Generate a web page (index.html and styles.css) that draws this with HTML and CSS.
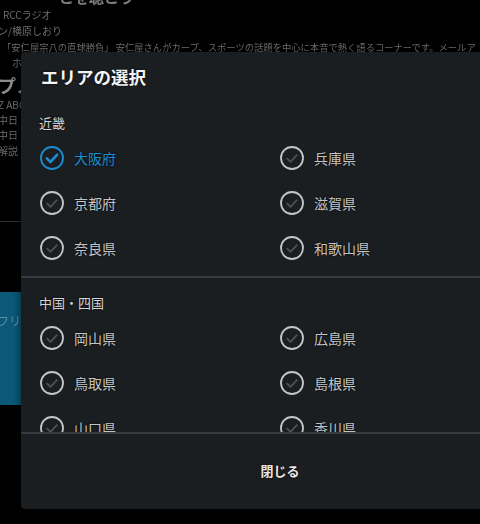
FILE: index.html
```html
<!DOCTYPE html>
<html lang="ja">
<head>
<meta charset="utf-8">
<link rel="stylesheet" href="styles.css">
</head>
<body>
<div class="page">
  <div class="bg">
    <div class="bg-head">ーこを聴こう</div>
    <div class="bg-line">| RCCラジオ</div>
    <div class="bg-line">ン/横原しおり</div>
    <div class="bg-line bg-long">「安仁屋宗八の直球勝負」 安仁屋さんがカープ、スポーツの話題を中心に本音で熱く語るコーナーです。メールア</div>
    <div class="bg-line bg-indent">ホー</div>
    <div class="bg-title">プノ</div>
    <div class="bg-line sm">Z ABC</div>
    <div class="bg-line sm">中日 (</div>
    <div class="bg-line">中日 (</div>
    <div class="bg-line sm">解説：</div>
    <div class="bg-rule"></div>
    <div class="bg-banner">フリー</div>
  </div>

  <div class="dialog">
    <div class="dialog-header">
      <h1 class="dialog-title">エリアの選択</h1>
    </div>
    <div class="dialog-body">
      <section class="area">
        <div class="area-label">近畿</div>
        <div class="options">
          <div class="option checked"><svg class="check" viewBox="0 0 24 24"><circle cx="12" cy="12" r="11"/><path d="M6.8 12.4l3.6 3.6 6.8-7.4"/></svg><span>大阪府</span></div>
          <div class="option"><svg class="check" viewBox="0 0 24 24"><circle cx="12" cy="12" r="11"/><path d="M7.2 12.6l3.3 3.3 6.3-6.8"/></svg><span>兵庫県</span></div>
          <div class="option"><svg class="check" viewBox="0 0 24 24"><circle cx="12" cy="12" r="11"/><path d="M7.2 12.6l3.3 3.3 6.3-6.8"/></svg><span>京都府</span></div>
          <div class="option"><svg class="check" viewBox="0 0 24 24"><circle cx="12" cy="12" r="11"/><path d="M7.2 12.6l3.3 3.3 6.3-6.8"/></svg><span>滋賀県</span></div>
          <div class="option"><svg class="check" viewBox="0 0 24 24"><circle cx="12" cy="12" r="11"/><path d="M7.2 12.6l3.3 3.3 6.3-6.8"/></svg><span>奈良県</span></div>
          <div class="option"><svg class="check" viewBox="0 0 24 24"><circle cx="12" cy="12" r="11"/><path d="M7.2 12.6l3.3 3.3 6.3-6.8"/></svg><span>和歌山県</span></div>
        </div>
      </section>
      <section class="area">
        <div class="area-label">中国・四国</div>
        <div class="options">
          <div class="option"><svg class="check" viewBox="0 0 24 24"><circle cx="12" cy="12" r="11"/><path d="M7.2 12.6l3.3 3.3 6.3-6.8"/></svg><span>岡山県</span></div>
          <div class="option"><svg class="check" viewBox="0 0 24 24"><circle cx="12" cy="12" r="11"/><path d="M7.2 12.6l3.3 3.3 6.3-6.8"/></svg><span>広島県</span></div>
          <div class="option"><svg class="check" viewBox="0 0 24 24"><circle cx="12" cy="12" r="11"/><path d="M7.2 12.6l3.3 3.3 6.3-6.8"/></svg><span>鳥取県</span></div>
          <div class="option"><svg class="check" viewBox="0 0 24 24"><circle cx="12" cy="12" r="11"/><path d="M7.2 12.6l3.3 3.3 6.3-6.8"/></svg><span>島根県</span></div>
          <div class="option"><svg class="check" viewBox="0 0 24 24"><circle cx="12" cy="12" r="11"/><path d="M7.2 12.6l3.3 3.3 6.3-6.8"/></svg><span>山口県</span></div>
          <div class="option"><svg class="check" viewBox="0 0 24 24"><circle cx="12" cy="12" r="11"/><path d="M7.2 12.6l3.3 3.3 6.3-6.8"/></svg><span>香川県</span></div>
          <div class="option"><svg class="check" viewBox="0 0 24 24"><circle cx="12" cy="12" r="11"/><path d="M7.2 12.6l3.3 3.3 6.3-6.8"/></svg><span>徳島県</span></div>
          <div class="option"><svg class="check" viewBox="0 0 24 24"><circle cx="12" cy="12" r="11"/><path d="M7.2 12.6l3.3 3.3 6.3-6.8"/></svg><span>愛媛県</span></div>
        </div>
      </section>
    </div>
    <div class="dialog-footer">
      <button class="close-btn" type="button">閉じる</button>
    </div>
  </div>
</div>
</body>
</html>
```
FILE: styles.css
```css
* { box-sizing: border-box; }
html, body {
  margin: 0;
  padding: 0;
  background: #000;
}
body {
  width: 480px;
  height: 524px;
  overflow: hidden;
  font-family: "Noto Sans CJK JP", "Noto Sans", sans-serif;
}
.page {
  position: relative;
  width: 480px;
  height: 524px;
  overflow: hidden;
}

/* background page (dimmed) */
.bg {
  color: #6c6c6c;
  font-size: 10px;
  padding-top: 8px;
  filter: blur(0.5px);
}
.bg-head {
  font-size: 15px;
  font-weight: bold;
  line-height: 16px;
  margin-top: -19px;
  padding-left: 44px;
  color: #7a7a7a;
}
.bg-line {
  height: 16px;
  line-height: 16px;
  white-space: nowrap;
  margin-left: -2px;
}
.bg-head + .bg-line { margin-top: 2px; }
.bg-line.sm { height: 15px; line-height: 15px; }
.bg-long { font-size: 9.3px; margin-left: 2px; }
.bg-indent { padding-left: 14px; }
.bg-title {
  font-size: 18px;
  font-weight: bold;
  line-height: 24px;
  height: 24px;
  margin-top: 2px;
  color: #8c8c8c;
  margin-left: -2px;
}
.bg-rule {
  height: 1px;
  background: #303030;
  margin-top: 63px;
}
.bg-banner {
  margin-top: 70px;
  height: 113px;
  background: #0b5879;
  color: #5f8ea4;
  font-size: 12px;
  padding-top: 20px;
  margin-left: -3px;
}

/* dialog */
.dialog {
  position: absolute;
  left: 21px;
  top: 52px;
  width: 518px;
  height: 457px;
  background: #1b1e21;
  border-radius: 4px;
  display: flex;
  flex-direction: column;
  box-shadow: 0 2px 8px rgba(0,0,0,0.6);
}
.dialog-header {
  height: 46px;
  padding: 14px 20px 0;
  flex: none;
}
.dialog-title {
  margin: 0;
  font-size: 17.5px;
  line-height: 22px;
  font-weight: bold;
  color: #f4f4f4;
  text-shadow: 0 0 2px #000;
}
.dialog-body {
  flex: 1;
  overflow: hidden;
}
.area {
  padding: 15px 0 6px 19px;
}
.area + .area {
  border-top: 2px solid #373b3f;
}
.area-label {
  font-size: 13px;
  line-height: 20px;
  height: 20px;
  color: #d4d4d4;
  margin-left: -1px;
  margin-bottom: 2px;
  text-shadow: 0 0 2px #000;
}
.options {
  display: grid;
  grid-template-columns: 240px 240px;
  grid-auto-rows: 45px;
}
.option {
  display: flex;
  align-items: center;
  gap: 10px;
  font-size: 14px;
  color: #c4c4c4;
  text-shadow: 0 0 2px #000;
}
.check {
  width: 24px;
  height: 24px;
  flex: none;
  fill: none;
}
.check circle {
  stroke: #c6c6c6;
  stroke-width: 1.8;
}
.check path {
  stroke: #4d5155;
  stroke-width: 1.8;
  stroke-linecap: round;
  stroke-linejoin: round;
}
.option.checked { color: #1b8ed3; }
.option.checked .check circle { stroke: #1b8ed3; }
.option.checked .check path { stroke: #1b8ed3; stroke-width: 2.6; }

.dialog-footer {
  height: 77px;
  flex: none;
  border-top: 2px solid #373b3f;
  display: flex;
  align-items: center;
  justify-content: center;
}
.close-btn {
  background: none;
  border: none;
  font-family: inherit;
  font-size: 13px;
  font-weight: bold;
  color: #e8e8e8;
  padding: 6px 16px 8px;
  text-shadow: 0 0 2px #000;
}
```
